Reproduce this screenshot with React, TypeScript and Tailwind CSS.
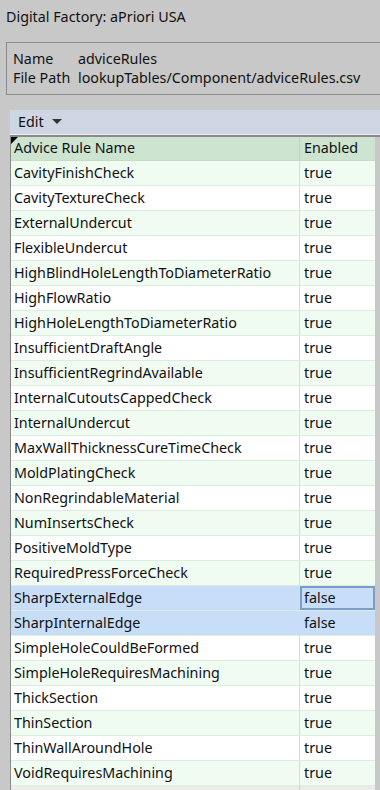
import React from "react";

const rows: [string, string][] = [
  ["CavityFinishCheck", "true"],
  ["CavityTextureCheck", "true"],
  ["ExternalUndercut", "true"],
  ["FlexibleUndercut", "true"],
  ["HighBlindHoleLengthToDiameterRatio", "true"],
  ["HighFlowRatio", "true"],
  ["HighHoleLengthToDiameterRatio", "true"],
  ["InsufficientDraftAngle", "true"],
  ["InsufficientRegrindAvailable", "true"],
  ["InternalCutoutsCappedCheck", "true"],
  ["InternalUndercut", "true"],
  ["MaxWallThicknessCureTimeCheck", "true"],
  ["MoldPlatingCheck", "true"],
  ["NonRegrindableMaterial", "true"],
  ["NumInsertsCheck", "true"],
  ["PositiveMoldType", "true"],
  ["RequiredPressForceCheck", "true"],
  ["SharpExternalEdge", "false"],
  ["SharpInternalEdge", "false"],
  ["SimpleHoleCouldBeFormed", "true"],
  ["SimpleHoleRequiresMachining", "true"],
  ["ThickSection", "true"],
  ["ThinSection", "true"],
  ["ThinWallAroundHole", "true"],
  ["VoidRequiresMachining", "true"],
];

export default function App() {
  return (
    <div
      className="w-[380px] h-[790px] overflow-hidden bg-[#c8c8c8] text-[#111] text-[14.3px] leading-none"
      style={{ fontFamily: '"Noto Sans", "Open Sans", sans-serif' }}
    >
      <div className="h-[34px] pl-[6px] pt-[10px]">Digital Factory: aPriori USA</div>
      <div className="ml-[6px] mt-[8px] h-[53px] border border-r-0 border-[#8c8c8c] pl-[6px] pt-[9px] flex flex-col gap-[5px]">
        <div className="flex">
          <span className="w-[65px]">Name</span>
          <span>adviceRules</span>
        </div>
        <div className="flex">
          <span className="w-[65px]">File Path</span>
          <span>lookupTables/Component/adviceRules.csv</span>
        </div>
      </div>
      <div className="ml-[10px] mt-[15px] h-[24px] bg-[#ced6e4] flex items-center pl-[8px] gap-[8px]">
        <span>Edit</span>
        <svg width="10" height="6" viewBox="0 0 10 6">
          <path d="M0 0 L10 0 L5 5 Z" fill="#333" />
        </svg>
      </div>
      <div className="ml-[10px] h-[1px] bg-[#f0f0f0]" />
      <div className="ml-[10px] h-[2px] bg-[#8a8a8a]" />
      <div className="ml-[10px] flex">
        <div className="w-[365px] border-l border-[#8a8a8a] bg-white relative">
          <div className="absolute left-0 top-0 w-0 h-0 border-t-[7px] border-r-[7px] border-t-black border-r-transparent" />
          <div className="flex h-[24px] bg-[#cde4d1] items-center border-b border-[#c2dcc6]">
            <div className="w-[289px] pl-[3px] border-r border-[#bdd6c1] h-full flex items-center">Advice Rule Name</div>
            <div className="flex-1 pl-[4px]">Enabled</div>
          </div>
          {rows.map(([name, val], i) => {
            const selected = name === "SharpExternalEdge" || name === "SharpInternalEdge";
            const bg = selected ? "bg-[#c8def8]" : i % 2 === 0 ? "bg-[#f0fbf1]" : "bg-white";
            const focused = name === "SharpExternalEdge";
            return (
              <div key={name} className={`flex h-[25px] items-center border-b border-[#d9eedc] ${bg}`}>
                <div className="w-[289px] pl-[3px] border-r border-[#cfe3d2] h-full flex items-center">{name}</div>
                <div className="flex-1 h-full flex items-center">
                  {focused ? (
                    <div className="w-full h-full border-2 border-[#7b9ec9] flex items-center pl-[2px]">{val}</div>
                  ) : (
                    <div className="pl-[4px]">{val}</div>
                  )}
                </div>
              </div>
            );
          })}
          <div className="flex h-[10px] bg-[#ebebeb]">
            <div className="w-[289px] border-r border-[#cfcfcf]" />
          </div>
        </div>
        <div className="flex-1" />
      </div>
    </div>
  );
}
